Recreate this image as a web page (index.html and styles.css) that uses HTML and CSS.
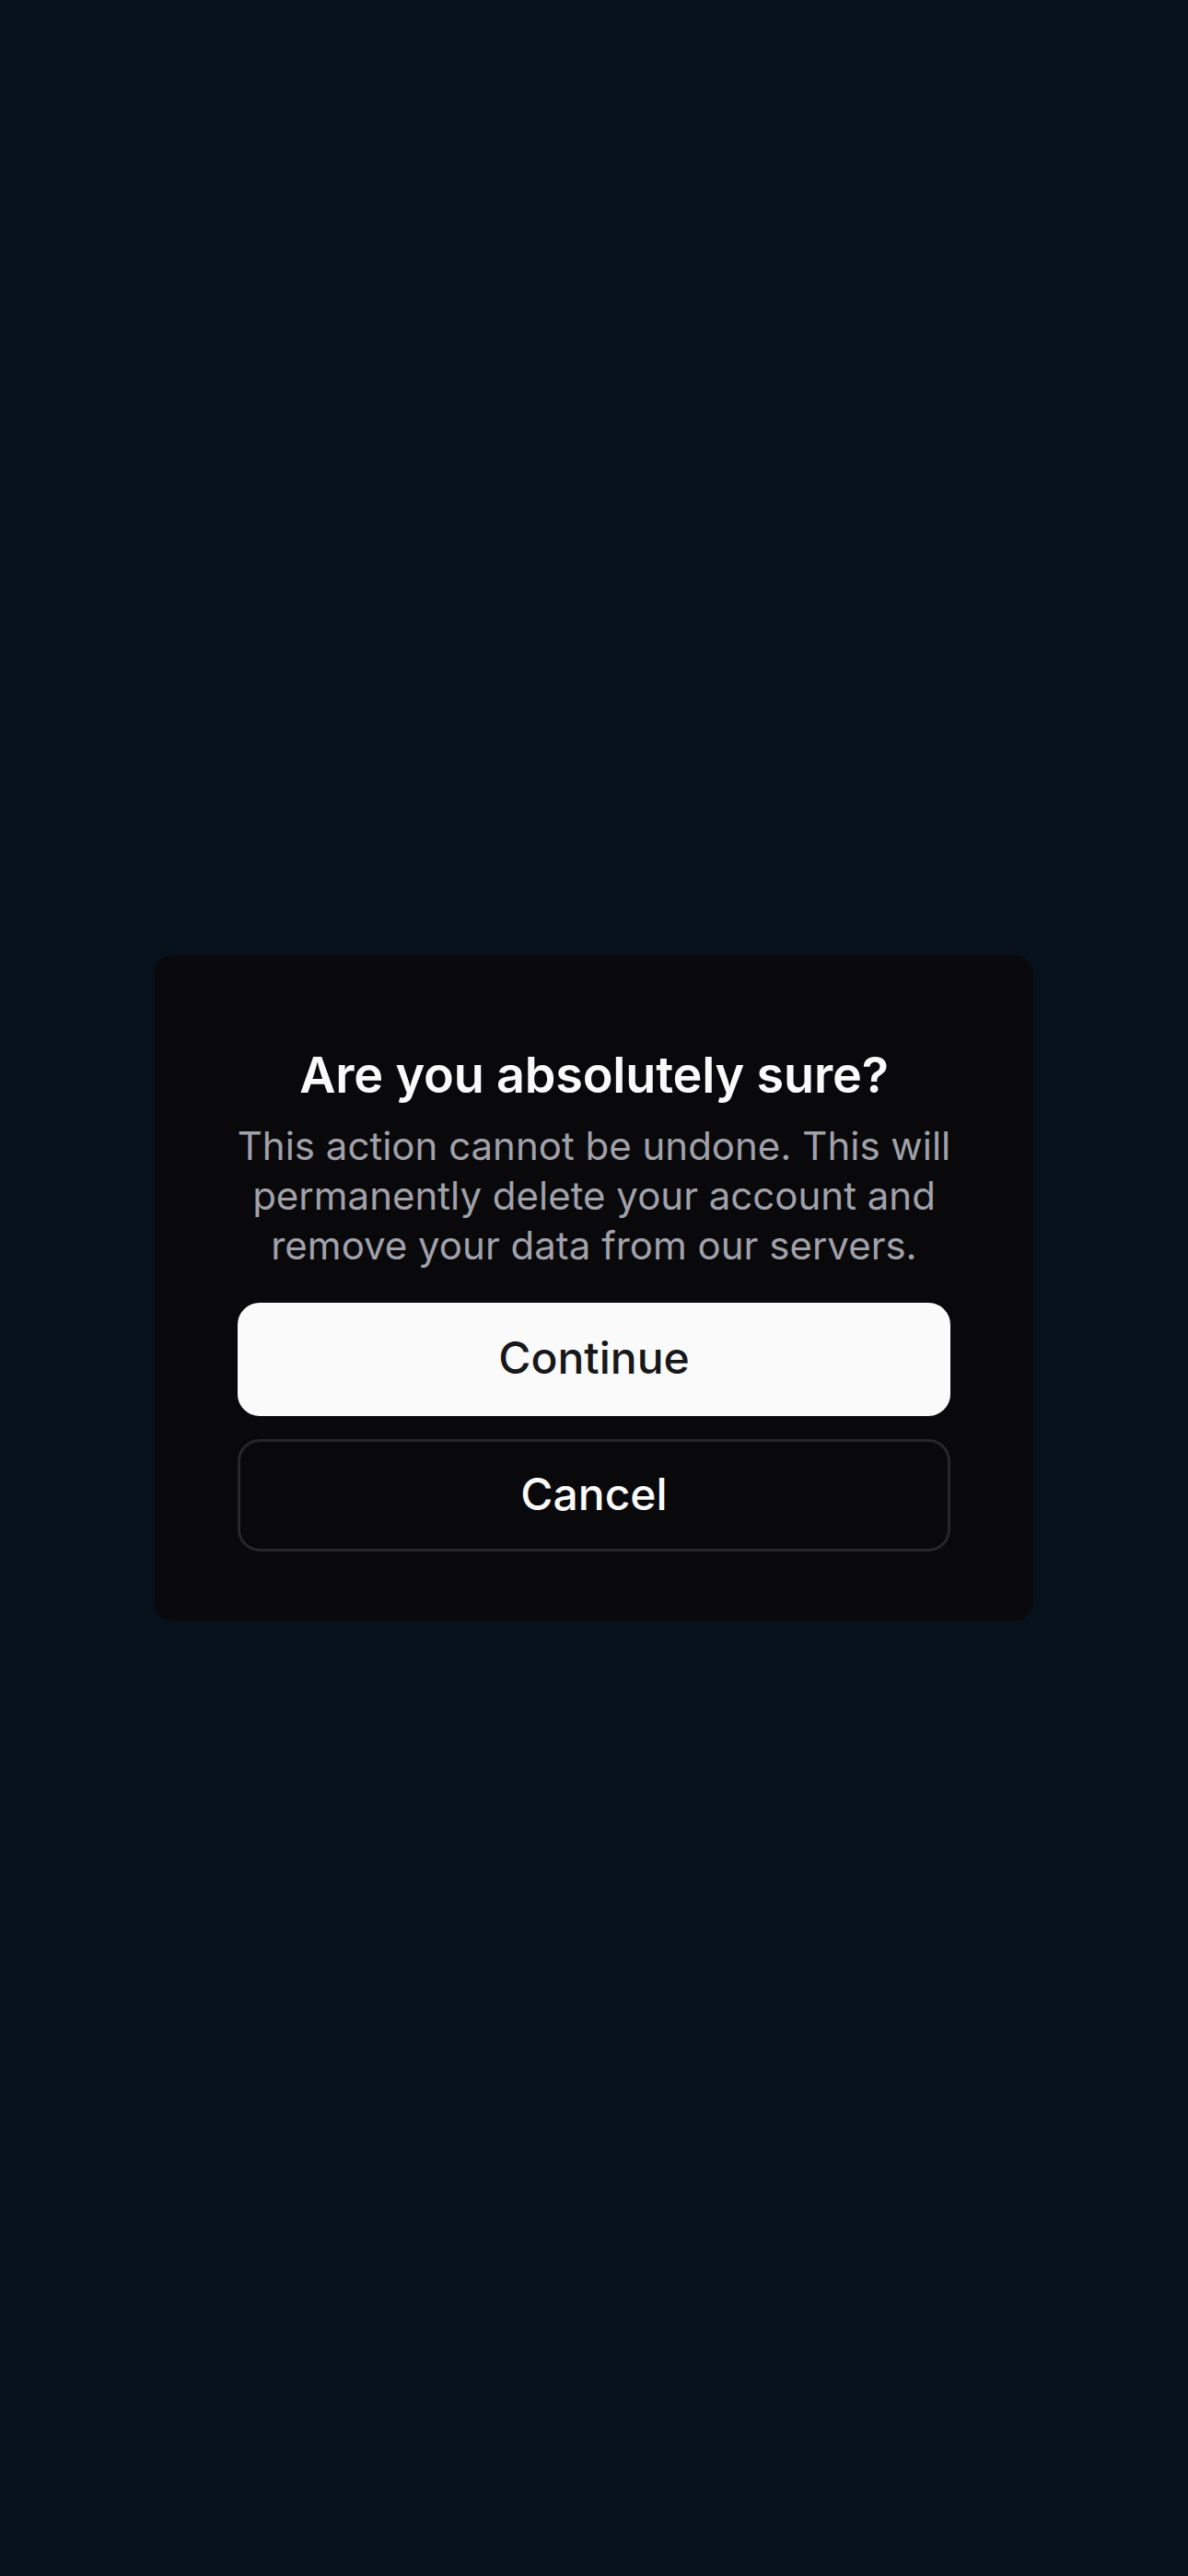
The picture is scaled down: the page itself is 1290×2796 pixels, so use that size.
FILE: index.html
```html
<!DOCTYPE html>
<html lang="en">
<head>
<meta charset="utf-8">
<title>Alert Dialog</title>
<link rel="stylesheet" href="styles.css">
</head>
<body>
  <main class="overlay">
    <section class="dialog" role="alertdialog" aria-labelledby="dlg-title" aria-describedby="dlg-desc">
      <h2 class="dialog-title" id="dlg-title">Are you absolutely sure?</h2>
      <p class="dialog-desc" id="dlg-desc">This action cannot be undone. This will permanently delete your account and remove your data from our servers.</p>
      <div class="dialog-actions">
        <button class="btn btn-primary" type="button">Continue</button>
        <button class="btn btn-outline" type="button">Cancel</button>
      </div>
    </section>
  </main>
</body>
</html>
```
FILE: styles.css
```css
* {
  box-sizing: border-box;
}

html, body {
  margin: 0;
  padding: 0;
  background: #07111b;
}

body {
  font-family: Inter, "Noto Sans", "Liberation Sans", sans-serif;
  color: #fafafa;
}

.overlay {
  min-height: 100vh;
  display: flex;
  align-items: center;
  justify-content: center;
}

.dialog {
  width: 954px;
  background: #09090b;
  border-radius: 20px;
  padding: 94px 90px 75px;
  display: flex;
  flex-direction: column;
  text-align: center;
}

.dialog-title {
  margin: 0 0 14px;
  font-size: 54px;
  line-height: 72px;
  font-weight: 600;
  color: #fafafa;
  letter-spacing: -0.2px;
}

.dialog-desc {
  margin: 0 -10px 35px;
  font-size: 42px;
  line-height: 54px;
  font-weight: 400;
  color: #a1a1aa;
}

.dialog-actions {
  display: flex;
  flex-direction: column;
  gap: 25px;
}

.btn {
  width: 100%;
  height: 123px;
  padding: 0 0 4px;
  border-radius: 24px;
  font-family: inherit;
  font-size: 48px;
  font-weight: 500;
  display: flex;
  align-items: center;
  justify-content: center;
  cursor: pointer;
}

.btn-primary {
  background: #fafafa;
  color: #18181b;
  border: 3px solid #fafafa;
}

.btn-outline {
  height: 122px;
  background: #09090b;
  color: #fafafa;
  border: 3px solid #27272a;
}
```
